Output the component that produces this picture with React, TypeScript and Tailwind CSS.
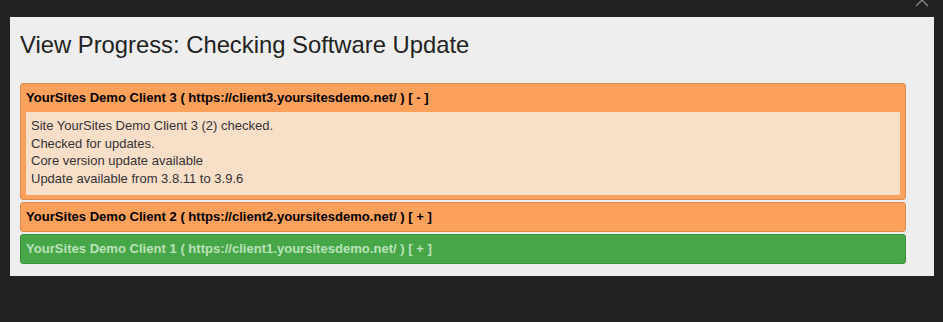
import { useState } from "react";

type Site = {
	name: string;
	url: string;
	status: "pending" | "done";
	log: string[];
};

const sites: Site[] = [
	{
		name: "YourSites Demo Client 3",
		url: "https://client3.yoursitesdemo.net/",
		status: "pending",
		log: [
			"Site YourSites Demo Client 3 (2) checked.",
			"Checked for updates.",
			"Core version update available",
			"Update available from 3.8.11 to 3.9.6",
		],
	},
	{
		name: "YourSites Demo Client 2",
		url: "https://client2.yoursitesdemo.net/",
		status: "pending",
		log: [],
	},
	{
		name: "YourSites Demo Client 1",
		url: "https://client1.yoursitesdemo.net/",
		status: "done",
		log: [],
	},
];

function SiteRow({ site, initialOpen }: { site: Site; initialOpen: boolean }) {
	const [open, setOpen] = useState(initialOpen);
	const isDone = site.status === "done";

	return (
		<div
			className={
				isDone
					? "rounded-[3px] border border-[#3c8f3c] bg-[#47a647]"
					: "rounded-[3px] border border-[#d98a4e] bg-[#fca15c]"
			}
		>
			{/* header line */}
			<div
				onClick={() => setOpen(!open)}
				className={
					"cursor-pointer px-[5px] h-[28px] flex items-center text-[13.07px] font-bold " +
					(isDone ? "text-[#b9e3b9]" : "text-black")
				}
			>
				{site.name} ( {site.url} ) [ {open ? "-" : "+"} ]
			</div>

			{/* log */}
			{open && (
				<div className="mx-[5px] mb-[4px] bg-[#f9dec8] px-[5px] pt-[5px] pb-[7px] text-[13px] leading-[17.7px] text-[#333]">
					{site.log.map((line, i) => (
						<div key={i}>{line}</div>
					))}
				</div>
			)}
		</div>
	);
}

export default function App() {
	return (
		<div
			className="w-[943px] h-[322px] bg-[#222] overflow-hidden relative"
			style={{ fontFamily: '"Liberation Sans", Arial, sans-serif' }}
		>
			{/* close button, mostly off screen */}
			<svg
				className="absolute left-[914px] top-[-8px]"
				width="16"
				height="16"
				viewBox="0 0 16 16"
			>
				<path d="M2 2 L14 14 M14 2 L2 14" stroke="#8a8a8a" strokeWidth="1.3" fill="none" />
			</svg>

			<div className="mt-[17px] ml-[10px] w-[924px] h-[259px] bg-[#eee] px-[10px] pt-[14px]">
				<h2 className="text-[23.8px] leading-[28px] text-[#222] font-normal">
					View Progress: Checking Software Update
				</h2>

				<div className="mt-[24px] w-[886px] flex flex-col gap-[2px]">
					{sites.map((s, i) => (
						<SiteRow key={s.url} site={s} initialOpen={i === 0} />
					))}
				</div>
			</div>
		</div>
	);
}
